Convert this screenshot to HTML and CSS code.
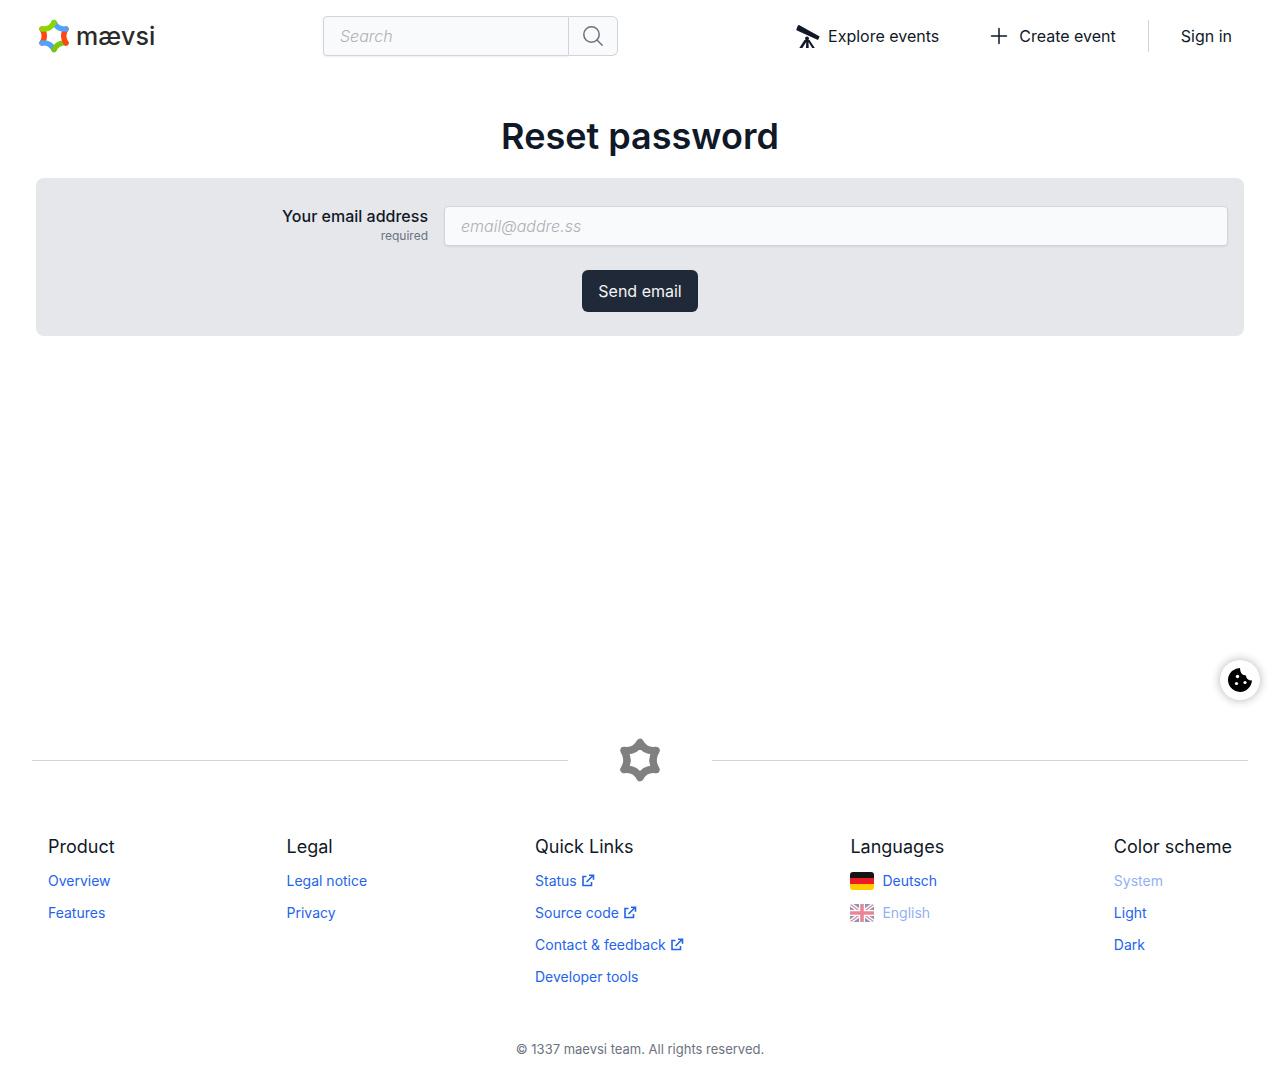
FILE: index.html
```html
<!DOCTYPE html>
<html lang="en">
<head>
<meta charset="utf-8">
<meta name="viewport" content="width=device-width, initial-scale=1">
<title>Reset password</title>
<link rel="stylesheet" href="styles.css">
</head>
<body>
<svg class="sprite" aria-hidden="true">
  <symbol id="external" viewBox="0 0 14 14"><path d="M5.500 2.500H2v9h8.500V8M5.500 8l6-6M8 1.200h4.500v4.500" fill="none" stroke="currentColor" stroke-width="1.600"/></symbol>
</svg>
<header class="header">
  <a class="brand" href="#">
    <svg class="brand-mark" viewBox="0 0 40 44" fill="none" stroke-width="7" stroke-linecap="round" aria-hidden="true">
      <path stroke="#ff4613" d="M4.500 13Q10.500 22 4.500 31"/>
      <path stroke="#51a1ff" d="M4.500 31Q15 30 20 39.500"/>
      <path stroke="#7ac70c" d="M20 39.500Q25 30 35.500 31"/>
      <path stroke="#ff4613" d="M35.500 31Q29.500 22 35.500 13"/>
      <path stroke="#51a1ff" d="M35.500 13Q25 14 20 4.500"/>
      <path stroke="#8cd600" d="M20 4.500Q15 14 4.500 13"/>
    </svg>
    <span>mævsi</span>
  </a>
  <form class="search" role="search">
    <input class="field search-input" type="search" placeholder="Search" aria-label="Search">
    <button class="search-button" type="button" aria-label="Search">
      <svg viewBox="0 0 24 24" width="24" height="24" fill="none" stroke="currentColor" stroke-width="1.500" stroke-linecap="round"><circle cx="10.500" cy="10.500" r="7.700"/><path d="m16 16 5.200 5.200"/></svg>
    </button>
  </form>
  <nav class="nav">
    <a class="nav-link" href="#">
      <svg viewBox="0 0 24 24" width="24" height="24" fill="currentColor" aria-hidden="true"><path d="M3 1 23.700 12.500 22 16 1 6.500Q0 6 .5 5L1.800 1.800Q2.200 .8 3 1Z"/><circle cx="11" cy="14.500" r="2"/><path d="M8.500 16h5L18.800 24h-2.600l-3.700-6 .2 6h-2.700l.2-6-3.800 6H3.300Z"/></svg>
      <span>Explore events</span>
    </a>
    <a class="nav-link" href="#">
      <svg viewBox="0 0 24 24" width="24" height="24" fill="none" stroke="currentColor" stroke-width="1.500" stroke-linecap="round" aria-hidden="true"><path d="M12 4.500v15M4.500 12h15"/></svg>
      <span>Create event</span>
    </a>
    <a class="sign-in" href="#">Sign in</a>
  </nav>
</header>
<main class="main">
  <h1>Reset password</h1>
  <form class="card">
    <div class="form-row">
      <label class="label" for="email">Your email address <span class="required">required</span></label>
      <input class="field" id="email" type="email" placeholder="email@addre.ss" required>
    </div>
    <button class="submit" type="button">Send email</button>
  </form>
  <button class="cookie" type="button" aria-label="Cookie settings">
    <svg viewBox="0 0 24 24" width="24" height="24"><path d="M12 0Q8 0 4 3A12 12 0 1 0 24 12.500Q21 12.500 19.500 11Q18 9.500 18 7.500Q15 7.500 13.500 5.500Q12 3.500 12 0Z"/><g fill="#fff"><circle cx="9.500" cy="8.500" r="1.700"/><circle cx="8.500" cy="15.500" r="1.600"/><circle cx="17" cy="14.500" r="1.600"/></g></svg>
  </button>
</main>
<footer class="footer">
  <div class="divider">
    <svg viewBox="0 0 40 44" width="40" height="44" fill="none" stroke="#808080" stroke-width="7.500" stroke-linejoin="round" aria-hidden="true"><path d="M20 4.500Q15 14 4 12.500Q10 22 4 31.500Q15 30 20 39.500Q25 30 36 31.500Q30 22 36 12.500Q25 14 20 4.500Z"/></svg>
  </div>
  <div class="columns">
    <section><h2>Product</h2><ul>
      <li><a href="#">Overview</a></li>
      <li><a href="#">Features</a></li>
    </ul></section>
    <section><h2>Legal</h2><ul>
      <li><a href="#">Legal notice</a></li>
      <li><a href="#">Privacy</a></li>
    </ul></section>
    <section><h2>Quick Links</h2><ul>
      <li><a href="#">Status<svg class="external"><use href="#external"/></svg></a></li>
      <li><a href="#">Source code<svg class="external"><use href="#external"/></svg></a></li>
      <li><a href="#">Contact &amp; feedback<svg class="external"><use href="#external"/></svg></a></li>
      <li><a href="#">Developer tools</a></li>
    </ul></section>
    <section><h2>Languages</h2><ul>
      <li><a href="#"><svg class="flag" viewBox="0 0 24 18"><path fill="#141414" d="M0 0h24v6H0z"/><path fill="#ed1c24" d="M0 6h24v6H0z"/><path fill="#fc0" d="M0 12h24v6H0z"/></svg>Deutsch</a></li>
      <li><a class="current" href="#" aria-current="true"><svg class="flag" viewBox="0 0 24 18"><path fill="#1b2f7a" d="M0 0h24v18H0z"/><path stroke="#fff" stroke-width="4" d="m0 0 24 18M24 0 0 18"/><path stroke="#d21034" stroke-width="1.300" d="m0 0 24 18M24 0 0 18"/><path stroke="#fff" stroke-width="6" d="M12 0v18M0 9h24"/><path stroke="#d21034" stroke-width="3.600" d="M12 0v18M0 9h24"/></svg>English</a></li>
    </ul></section>
    <section><h2>Color scheme</h2><ul>
      <li><a class="current" href="#" aria-current="true">System</a></li>
      <li><a href="#">Light</a></li>
      <li><a href="#">Dark</a></li>
    </ul></section>
  </div>
  <p class="copyright">© 1337 maevsi team. All rights reserved.</p>
</footer>
</body>
</html>
```
FILE: styles.css
```css
* { box-sizing: border-box; }
body {
  margin: 0;
  min-height: 100vh;
  display: flex;
  flex-direction: column;
  background: #fff;
  color: #111827;
  font: 500 16px/24px Inter, "Liberation Sans", sans-serif;
}
a { color: inherit; text-decoration: none; }
h1, h2, p, ul { margin: 0; padding: 0; }
ul { list-style: none; }
button, input { font: inherit; }
svg { display: block; flex: none; }
.sprite { position: absolute; width: 0; height: 0; }

.header {
  display: grid;
  grid-template-columns: 291fr 295fr 614fr;
  align-items: center;
  padding: 16px 48px 16px 32px;
}
.brand {
  display: flex;
  align-items: center;
  gap: 6px;
  padding-left: 6px;
  color: #2b2b2b;
  font-size: 25px;
  font-weight: 500;
  line-height: 32px;
}
.brand-mark { width: 32px; height: 34px; }
.field {
  width: 100%;
  min-width: 0;
  height: 40px;
  padding: 8px 16px;
  border: 1px solid #d1d5db;
  border-radius: 4px;
  background: #f9fafb;
  color: #111827;
  box-shadow: 0 1px 2px rgb(0 0 0 / 8%);
  appearance: none;
}
.field::placeholder { color: #aeb1b8; font-style: italic; font-weight: 300; opacity: 1; }
.search { display: flex; }
.search-input { flex: 1; border-radius: 4px 0 0 4px; }
.search-button {
  width: 49px;
  height: 40px;
  display: grid;
  place-items: center;
  padding: 0;
  border: 1px solid #d1d5db;
  border-left: 0;
  border-radius: 0 6px 6px 0;
  background: #f9fafb;
  color: #6b7280;
}
.nav { display: flex; align-items: center; justify-content: flex-end; font-weight: 400; white-space: nowrap; }
.nav-link { display: flex; align-items: center; gap: 8px; margin-left: 48px; }
.nav-link:first-child { margin-left: 0; }
.sign-in { margin-left: 32px; padding: 4px 0 4px 32px; border-left: 1px solid #d1d5db; }

.main { position: relative; flex: 1; padding: 40px 36px; }
h1 { margin-bottom: 18px; font-size: 36px; font-weight: 600; line-height: 48px; text-align: center; }
.card { padding: 28px 16px 24px; border-radius: 8px; background: #e5e7eb; }
.form-row { display: grid; grid-template-columns: 1fr 2fr; align-items: center; }
.label { padding-right: 16px; line-height: 20px; text-align: right; }
.required { display: block; color: #6b7280; font-size: 12px; font-weight: 400; }
.submit {
  display: block;
  height: 42px;
  margin: 24px auto 0;
  padding: 8px 16px;
  border: 0;
  border-radius: 6px;
  background: #1f2937;
  color: #f3f4f6;
  font-weight: 400;
}
.cookie {
  position: absolute;
  right: 20px;
  bottom: 20px;
  width: 40px;
  height: 40px;
  display: grid;
  place-items: center;
  padding: 0;
  border: 0;
  border-radius: 50%;
  background: #fff;
  box-shadow: 0 0 10px rgb(0 0 0 / 30%);
}

.footer { padding: 16px 32px 17px; font-size: 14px; line-height: 20px; }
.divider { display: grid; grid-template-columns: 1fr 144px 1fr; align-items: center; justify-items: center; height: 48px; margin-bottom: 48px; }
.divider::before, .divider::after { content: ""; width: 100%; height: 1px; background: #d1d5db; }
.columns { display: grid; grid-template-columns: 239fr 249fr 316fr 264fr auto; padding: 0 16px; white-space: nowrap; }
h2 { margin-bottom: 9px; font-size: 18px; font-weight: 400; line-height: 30px; }
.columns ul { display: grid; gap: 12px; color: #2563eb; font-weight: 400; }
.columns li a { display: flex; align-items: center; }
.columns li .current { opacity: .5; }
.external { width: 14px; height: 14px; margin-left: 4px; }
.flag { width: 24px; height: 18px; margin-right: 8px; border-radius: 3px; }
.copyright { margin-top: 52px; color: #6b7280; font-size: 13px; font-weight: 400; text-align: center; }

@media (max-width: 900px) {
  .header { grid-template-columns: 1fr; gap: 16px; padding: 16px; }
  .nav { flex-wrap: wrap; justify-content: flex-start; }
  .columns { grid-template-columns: 1fr 1fr; gap: 32px; }
}
```
